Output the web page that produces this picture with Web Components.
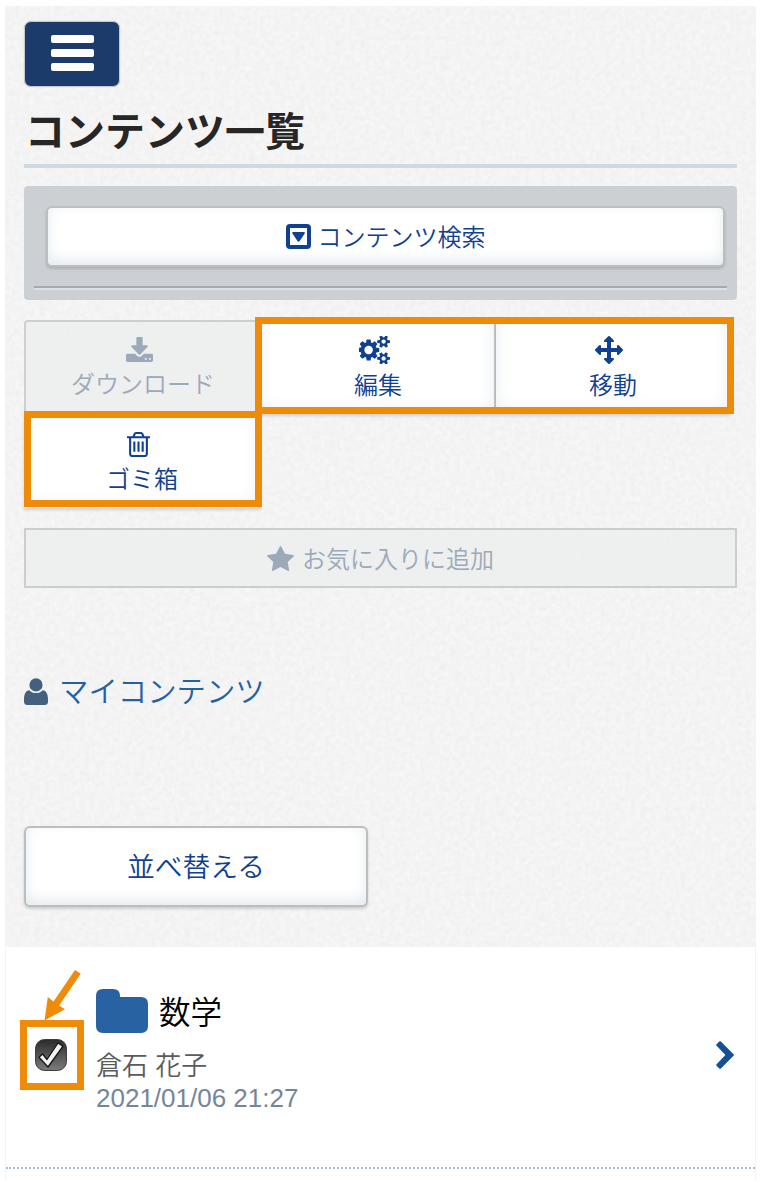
<!DOCTYPE html>
<html lang="ja">
<head>
<meta charset="utf-8">
<title>コンテンツ一覧</title>
<style>
  body {
    margin: 0;
    background: #fff;
    font-family: "Liberation Sans", "Noto Sans CJK JP", sans-serif;
    font-weight: 350;
    color: #222;
  }
</style>
</head>
<body>
<content-page>
  <menu-button></menu-button>
  <page-title>コンテンツ一覧</page-title>
  <search-panel>
    <push-button style="--height:61px; --size:24px">
      <app-icon name="caret" style="--w:25px; --h:25px"></app-icon><span>コンテンツ検索</span>
    </push-button>
  </search-panel>
  <tool-bar>
    <tool-button disabled>
      <app-icon slot="icon" name="download" style="--w:27px; --h:25px"></app-icon>ダウンロード
    </tool-button>
    <tool-button>
      <app-icon slot="icon" name="cogs" style="--w:31px; --h:28px"></app-icon>編集
    </tool-button>
    <tool-button>
      <app-icon slot="icon" name="arrows" style="--w:28px; --h:28px"></app-icon>移動
    </tool-button>
    <tool-button>
      <app-icon slot="icon" name="trash" style="--w:23px; --h:25px"></app-icon>ゴミ箱
    </tool-button>
    <highlight-box slot="mark" style="left:231px; top:-3px; width:479px; height:97px"></highlight-box>
    <highlight-box slot="mark" style="left:0; top:91px; width:238px; height:96px"></highlight-box>
  </tool-bar>
  <favorite-button>
    <app-icon name="star" style="--w:27px; --h:25px"></app-icon><span>お気に入りに追加</span>
  </favorite-button>
  <owner-link>マイコンテンツ</owner-link>
  <push-button class="sort" style="--height:81px; --size:27.800px; width:344px"><span>並べ替える</span></push-button>
  <content-row slot="list">
    <span slot="name">数学</span>
    <span slot="author">倉石 花子</span>
    <span slot="date">2021/01/06 21:27</span>
  </content-row>
</content-page>

<script>
/** 共通ベース — テンプレート文字列を shadow root に流し込む */
class BaseElement extends HTMLElement {
  constructor() {
    super();
    this.attachShadow({ mode: 'open' });
    this.shadowRoot.innerHTML = this.template();
  }

  template() {
    return '<slot></slot>';
  }
}

const SMALL_COG = 'v140q0 16-149 31-12 27-30 52 51 113 51 138 0 4-4 7-122 71-124 71-8 0-46-47t-52-68q-20 2-30 2t-30-2q-14 21-52 68t-46 47q-2 0-124-71-4-3-4-7 0-25 51-138-18-25-30-52-149-15-149-31v-140q0-16 149-31 13-29 30-52-51-113-51-138 0-4 4-7 4-2 35-20t59-34 30-16q8 0 46 46.500t52 67.500q20-2 30-2t30 2q51-71 92-112l6-2q4 0 124 70 4 3 4 7 0 25-51 138 17 23 30 52 149 15 149 31z';
const TRASH_BAR = 'v576q0 14-9 23t-23 9h-64q-14 0-23-9t-9-23v-576q0-14 9-23t23-9h64q14 0 23 9t9 23z';

// name: [viewBox, path]
const ICONS = {
  caret: ['0 0 25 25', 'M4 0H21Q25 0 25 4V21Q25 25 21 25H4Q0 25 0 21V4Q0 0 4 0ZM4 4V21H21V4ZM7.200 8H17.900Q19.700 8 18.700 9.500L13.700 17Q12.600 18.300 11.500 17L6.400 9.500Q5.400 8 7.200 8Z'],
  download: ['64 0 1664 1536', 'M1344 1344q0-26-19-45t-45-19-45 19-19 45 19 45 45 19 45-19 19-45zm256 0q0-26-19-45t-45-19-45 19-19 45 19 45 45 19 45-19 19-45zm128-224v320q0 40-28 68t-68 28h-1472q-40 0-68-28t-28-68v-320q0-40 28-68t68-28h465l135 136q58 56 136 56t136-56l136-136h464q40 0 68 28t28 68zm-325-569q17 41-14 70l-448 448q-18 19-45 19t-45-19l-448-448q-31-29-14-70 17-39 59-39h256v-448q0-26 19-45t45-19h256q26 0 45 19t19 45v448h256q42 0 59 39z'],
  cogs: ['0 45 1856 1702', 'M832 896q0-106-75-181t-181-75-181 75-75 181 75 181 181 75 181-75 75-181zm768 512q0-52-38-90t-90-38-90 38-38 90q0 53 37.500 90.500t90.500 37.500 90.500-37.500 37.500-90.500zm0-1024q0-52-38-90t-90-38-90 38-38 90q0 53 37.500 90.500t90.500 37.500 90.500-37.500 37.500-90.500zm-384 421v185q0 10-7 19.500t-16 10.500l-155 24q-11 35-32 76 34 48 90 115 7 11 7 20 0 12-7 19-23 30-82.500 89.500t-78.500 59.500q-11 0-21-7l-115-90q-37 19-77 31-11 108-23 155-7 24-30 24h-186q-11 0-20-7.500t-10-17.500l-23-153q-34-10-75-31l-118 89q-7 7-20 7-11 0-21-8-144-133-144-160 0-9 7-19 10-14 41-53t47-61q-23-44-35-82l-152-24q-10-1-17-9.500t-7-19.500v-185q0-10 7-19.500t16-10.500l155-24q11-35 32-76-34-48-90-115-7-11-7-20 0-12 7-20 22-30 82-89t79-59q11 0 21 7l115 90q34-18 77-32 11-108 23-154 7-24 30-24h186q11 0 20 7.500t10 17.500l23 153q34 10 75 31l118-89q8-7 20-7 11 0 21 8 144 133 144 160 0 8-7 19-12 16-42 54t-45 60q23 48 34 82l152 23q10 2 17 10.500t7 19.500zM1856 1338' + SMALL_COG + 'M1856 314' + SMALL_COG],
  arrows: ['0 0 1792 1792', 'M1792 896q0 26-19 45l-256 256q-19 19-45 19t-45-19-19-45v-128h-384v384h128q26 0 45 19t19 45-19 45l-256 256q-19 19-45 19t-45-19l-256-256q-19-19-19-45t19-45 45-19h128v-384h-384v128q0 26-19 45t-45 19-45-19l-256-256q-19-19-19-45t19-45l256-256q19-19 45-19t45 19 19 45v128h384v-384h-128q-26 0-45-19t-19-45 19-45l256-256q19-19 45-19t45 19l256 256q19 19 19 45t-19 45-45 19h-128v384h384v-128q0-26 19-45t45-19 45 19l256 256q19 19 19 45z'],
  trash: ['192 128 1408 1536', 'M704 736' + TRASH_BAR + 'M960 736' + TRASH_BAR + 'M1216 736' + TRASH_BAR + 'M1344 1460v-948h-896v948q0 22 7 40.500t14.500 27 10.500 8.500h832q3 0 10.500-8.500t14.500-27 7-40.500zm-672-1076h448l-48-117q-7-9-17-11h-317q-10 2-17 11zm928 32v64q0 14-9 23t-23 9h-96v948q0 83-47 143.500t-113 60.500h-832q-66 0-113-58.500t-47-141.500v-952h-96q-14 0-23-9t-9-23v-64q0-14 9-23t23-9h309l70-167q15-37 54-63t79-26h320q40 0 79 26t54 63l70 167h309q14 0 23 9t9 23z'],
  star: ['64 32 1664 1588', 'M1728 647q0 22-26 48l-363 354 86 500q1 7 1 20 0 21-10.500 35.500t-30.500 14.500q-19 0-40-12l-449-236-449 236q-22 12-40 12-21 0-31.500-14.500t-10.500-35.500q0-6 2-20l86-500-364-354q-25-27-25-48 0-37 56-46l502-73 225-455q19-41 49-41t49 41l225 455 502 73q56 9 56 46z'],
  user: ['0 0 24 27', 'M5.500 12.200C7 14.200 9.300 15 12 15S17 14.200 18.500 12.200C22.300 12.500 24 16 24 21.500V23.500Q24 27 20.500 27H3.500Q0 27 0 23.500V21.500C0 16 1.700 12.500 5.500 12.200ZM12 .3A6.600 6.600 0 1 1 12 13.500A6.600 6.600 0 1 1 12 .3Z'],
  folder: ['0 0 52 44', 'M7 0H17Q24 0 24 7V8H45Q52 8 52 15V37Q52 44 45 44H7Q0 44 0 37V7Q0 0 7 0Z'],
  chevron: ['0 0 18 28', 'M4.900.6L17.500 13.200Q18.300 14 17.500 14.800L4.900 27.400Q4 28.200 3.200 27.400L.6 24.800Q-.2 24 .6 23.200L9.400 14L.6 4.800Q-.2 4 .6 3.200L3.200.6Q4-.2 4.900.6Z'],
};

/** 単色アイコン */
class AppIcon extends BaseElement {
  template() {
    const [box, d] = ICONS[this.getAttribute('name')];
    return `
      <style>
        :host { display: inline-block; flex: none; width: var(--w); height: var(--h); }
        svg { display: block; width: 100%; height: 100%; fill: currentColor; }
      </style>
      <svg viewBox="${box}" preserveAspectRatio="none"><path fill-rule="${box === '0 0 25 25' ? 'evenodd' : 'nonzero'}" d="${d}"/></svg>
    `;
  }
}

/** ページ枠 — 上部は紙のような背景、下部は白いリスト */
class ContentPage extends BaseElement {
  template() {
    return `
      <style>
        :host {
          display: flex;
          flex-direction: column;
          box-sizing: border-box;
          width: 751px;
          height: 1174px;
          margin: 6px 4px 2px 5px;
          background: #f3f3f3;
        }
        .top {
          position: relative;
          isolation: isolate;
          box-sizing: border-box;
          height: 941px;
          padding: 15px 19px 0;
        }
        .paper { position: absolute; inset: 0; z-index: -1; width: 100%; height: 100%; }
        .list { flex: 1; margin: 0 1px; background: #fff; }
        ::slotted(.sort) { margin-top: 104px; }
      </style>
      <div class="top">
        <svg class="paper">
          <filter id="grain" x="0" y="0" width="100%" height="100%" color-interpolation-filters="sRGB">
            <feTurbulence type="fractalNoise" baseFrequency="0.2" numOctaves="2" seed="4" stitchTiles="stitch"/>
            <feColorMatrix values="0.045 0 0 0 0.932  0.045 0 0 0 0.932  0.045 0 0 0 0.932  0 0 0 0 1"/>
          </filter>
          <rect width="100%" height="100%" filter="url(#grain)"/>
        </svg>
        <slot></slot>
      </div>
      <div class="list"><slot name="list"></slot></div>
    `;
  }
}

class MenuButton extends BaseElement {
  template() {
    return `
      <style>
        :host {
          display: flex;
          flex-direction: column;
          align-items: center;
          gap: 6.500px;
          box-sizing: border-box;
          width: 96px;
          height: 66px;
          padding-top: 13px;
          border: 1px solid #c9c9c9;
          border-radius: 7px;
          background: #1b3b6b;
          box-shadow: 0 0 1px #bbb;
        }
        i { width: 43px; height: 7.700px; border-radius: 2px; background: #fff; }
      </style>
      <i></i><i></i><i></i>
    `;
  }
}

class PageTitle extends BaseElement {
  template() {
    return `
      <style>
        :host {
          display: block;
          box-sizing: border-box;
          height: 81px;
          padding: 15px 0 0 1px;
          border-bottom: 4px solid #cfd9e2;
          font-size: 40px;
          font-weight: 700;
          line-height: 60px;
          color: #262626;
        }
      </style>
      <slot></slot>
    `;
  }
}

class SearchPanel extends BaseElement {
  template() {
    return `
      <style>
        :host {
          display: block;
          box-sizing: border-box;
          height: 114px;
          margin-top: 18px;
          padding: 20px 10px 0;
          border-radius: 4px;
          background: #ccd0d5;
        }
        .body { padding: 0 2px 0 12px; }
        .line { height: 2px; margin-top: 19px; background: #a5a9b0; border-bottom: 2px solid #dcdfe3; }
      </style>
      <div class="body"><slot></slot></div>
      <div class="line"></div>
    `;
  }
}

class PushButton extends BaseElement {
  template() {
    return `
      <style>
        :host {
          display: flex;
          align-items: center;
          justify-content: center;
          gap: 7px;
          box-sizing: border-box;
          height: var(--height);
          border: 2px solid #bdbebf;
          border-radius: 6px;
          background: #fff;
          box-shadow: 0 2px 3px rgba(0, 0, 0, 0.16), inset 0 -5px 14px #e4eaee;
          font-size: var(--size);
          line-height: 1;
          color: #0f4091;
        }
        ::slotted(span) { padding-top: 3px; }
      </style>
      <slot></slot>
    `;
  }
}

class ToolBar extends BaseElement {
  template() {
    return `
      <style>
        :host {
          position: relative;
          display: grid;
          grid-template-columns: 236px 236px 234px;
          grid-auto-rows: 94px;
          height: 187px;
          margin-top: 20px;
        }
      </style>
      <slot></slot>
      <slot name="mark"></slot>
    `;
  }
}

class ToolButton extends BaseElement {
  template() {
    return `
      <style>
        :host {
          display: flex;
          flex-direction: column;
          align-items: center;
          box-sizing: border-box;
          padding-top: 14px;
          border-right: 2px solid #c4c5c6;
          background: #fff;
          box-shadow: 0 2px 3px rgba(0, 0, 0, 0.14), inset 0 -4px 16px #e8ecf1;
          font-size: 24px;
          line-height: 30px;
          color: #0f4091;
        }
        :host([disabled]) {
          padding: 11px 2px 0 0;
          border: 2px solid #cdcfcf;
          border-right: 0;
          border-radius: 4px 0 0;
          background: rgba(236, 238, 238, 0.8);
          box-shadow: none;
          color: #9ba9b9;
        }
        .icon { display: flex; align-items: center; height: 32px; margin-right: 6px; }
        .label { margin: 5px 0 0 2px; }
      </style>
      <div class="icon"><slot name="icon"></slot></div>
      <div class="label"><slot></slot></div>
    `;
  }
}

/** 注目箇所を囲むオレンジの枠 */
class HighlightBox extends BaseElement {
  template() {
    return `
      <style>
        :host { position: absolute; box-sizing: border-box; border: 7px solid #ee8c0a; }
      </style>
    `;
  }
}

class FavoriteButton extends BaseElement {
  template() {
    return `
      <style>
        :host {
          display: flex;
          align-items: center;
          justify-content: center;
          gap: 8px;
          box-sizing: border-box;
          height: 60px;
          margin-top: 21px;
          border: 2px solid #cdcdcd;
          background: rgba(236, 238, 238, 0.8);
          font-size: 24px;
          line-height: 1;
          color: #9ba9b9;
        }
        ::slotted(span) { padding-top: 3px; }
      </style>
      <slot></slot>
    `;
  }
}

class OwnerLink extends BaseElement {
  template() {
    return `
      <style>
        :host {
          display: flex;
          align-items: center;
          gap: 11px;
          height: 60px;
          margin-top: 74px;
          font-size: 29.400px;
          line-height: 1;
          color: #2261a5;
        }
        app-icon { --w: 24px; --h: 27px; margin-bottom: 2px; color: #43607e; }
      </style>
      <app-icon name="user"></app-icon>
      <span><slot></slot></span>
    `;
  }
}

/** リスト 1 行 — チェックボックス、フォルダー名、作成者、日時 */
class ContentRow extends BaseElement {
  template() {
    return `
      <style>
        :host {
          display: flex;
          box-sizing: border-box;
          height: 222px;
          padding: 42px 21px 0 14px;
          border-bottom: 2px dotted #a9bcd6;
        }
        .check {
          position: relative;
          display: grid;
          place-items: center;
          box-sizing: border-box;
          width: 64px;
          height: 70px;
          margin-top: 31px;
          padding-right: 2px;
        }
        highlight-box { inset: 0; }
        .arrow { position: absolute; left: 23px; top: -51px; }
        .info { flex: 1; margin-left: 12px; }
        .name {
          display: flex;
          align-items: center;
          gap: 11px;
          height: 44px;
          font-size: 31.500px;
          line-height: 48px;
          color: #000;
        }
        .name ::slotted(span) { padding-top: 4px; }
        .name app-icon { --w: 52px; --h: 44px; color: #2862a3; }
        .author { margin-top: 16px; font-size: 26px; line-height: 34px; color: #5b5b5b; }
        .date { font-size: 26px; line-height: 30px; color: #74869c; }
        .next { --w: 18px; --h: 28px; margin-top: 52px; color: #174f93; }
      </style>
      <div class="check">
        <svg width="34" height="34" viewBox="0 0 34 34">
          <defs>
            <linearGradient id="face" x2="0" y2="1">
              <stop offset="0" stop-color="#2b2b2b"/>
              <stop offset="1" stop-color="#7b7b7b"/>
            </linearGradient>
          </defs>
          <rect x="1.500" y="1.500" width="31" height="31" rx="9" fill="url(#face)" stroke="#3c3c3c"/>
          <path d="M5 19.200L8.600 16L13 21.500L24 5L28.800 8.300L14 29Z" fill="#f2f2f2" stroke="#151515" stroke-width="1.300" stroke-linejoin="round"/>
        </svg>
        <highlight-box></highlight-box>
        <svg class="arrow" width="40" height="54" viewBox="0 0 40 54">
          <path d="M32 1L37.700 4.800L16.200 36.500L22 40.300L1.500 51.500L4.800 28L10.500 32.500Z" fill="#ee8c0a"/>
        </svg>
      </div>
      <div class="info">
        <div class="name"><app-icon name="folder"></app-icon><slot name="name"></slot></div>
        <div class="author"><slot name="author"></slot></div>
        <div class="date"><slot name="date"></slot></div>
      </div>
      <app-icon class="next" name="chevron"></app-icon>
    `;
  }
}

customElements.define('app-icon', AppIcon);
customElements.define('content-page', ContentPage);
customElements.define('menu-button', MenuButton);
customElements.define('page-title', PageTitle);
customElements.define('search-panel', SearchPanel);
customElements.define('push-button', PushButton);
customElements.define('tool-bar', ToolBar);
customElements.define('tool-button', ToolButton);
customElements.define('highlight-box', HighlightBox);
customElements.define('favorite-button', FavoriteButton);
customElements.define('owner-link', OwnerLink);
customElements.define('content-row', ContentRow);
</script>
</body>
</html>
